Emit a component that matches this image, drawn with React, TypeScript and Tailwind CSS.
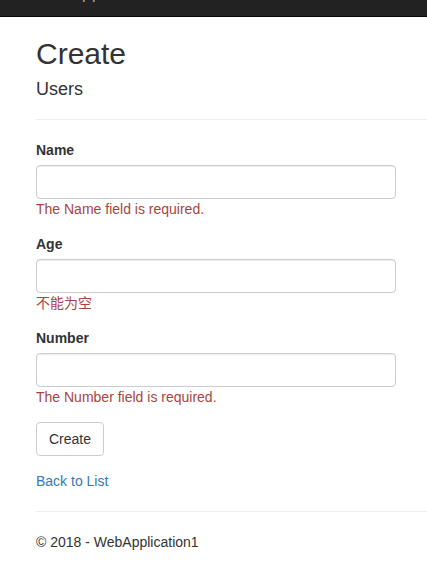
const fontStack = "font-['Liberation_Sans','Helvetica_Neue',Arial,sans-serif]";

const Field = ({ label, error }: { label: string; error: string }) => (
    <div className="mb-[15px]">
        <label className="block font-bold text-[14px] leading-[20px] mb-[5px]">{label}</label>
        <input
            type="text"
            className="block w-[360px] h-[34px] px-3 border border-[#ccc] rounded-[4px] bg-white shadow-[inset_0_1px_1px_rgba(0,0,0,0.075)] outline-none"
        />
        <span className="block text-[14px] leading-[20px] text-[#a94442] font-['Liberation_Sans','Noto_Sans_CJK_SC',sans-serif]">
            {error}
        </span>
    </div>
);

export default function App() {
    return (
        <div className={`min-h-screen bg-white text-[#333] ${fontStack}`}>
            {/* Navbar (scrolled mostly out of view) */}
            <div className="h-[17px] bg-[#222] border-b border-[#080808] overflow-hidden">
                <div className="pl-[33px] -mt-[18px] text-[18px] leading-[20px] text-[#9d9d9d]">WebApplication1</div>
            </div>

            <div className="pl-[36px]">
                <h2 className="mt-[20px] mb-[9px] text-[30px] leading-[33px] font-normal">Create</h2>
                <h4 className="mt-[9px] text-[18px] leading-[20px] font-normal">Users</h4>
                <hr className="mt-[20px] mb-[20px] border-t border-[#eee]" />

                <form onSubmit={(e) => e.preventDefault()}>
                    <Field label="Name" error="The Name field is required." />
                    <Field label="Age" error="不能为空" />
                    <Field label="Number" error="The Number field is required." />
                    <div className="mb-[15px]">
                        <button
                            type="submit"
                            className="h-[34px] px-3 border border-[#ccc] rounded-[4px] bg-white text-[14px] leading-[20px] text-[#333]"
                        >
                            Create
                        </button>
                    </div>
                </form>

                <div className="text-[14px] leading-[20px]">
                    <a href="#" className="text-[#337ab7]">Back to List</a>
                </div>

                <hr className="mt-[20px] mb-[20px] border-t border-[#eee]" />
                <footer>
                    <p className="text-[14px] leading-[20px] mb-[10px]">© 2018 - WebApplication1</p>
                </footer>
            </div>
        </div>
    );
}
